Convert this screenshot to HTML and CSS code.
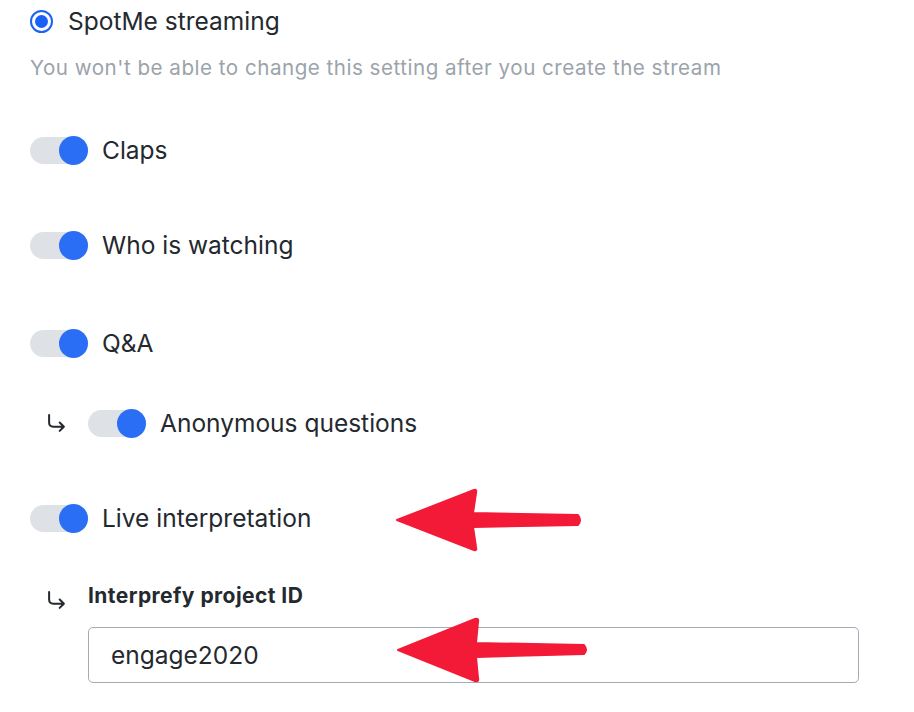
FILE: index.html
```html
<!DOCTYPE html>
<html lang="en">
<head>
<meta charset="utf-8">
<title>SpotMe streaming settings</title>
<link rel="stylesheet" href="styles.css">
</head>
<body>
<div class="page">
  <div class="row radio-row">
    <span class="radio"><span class="radio-dot"></span></span>
    <span class="label">SpotMe streaming</span>
  </div>
  <div class="helper">You won't be able to change this setting after you create the stream</div>

  <div class="row toggle-row r-claps">
    <span class="toggle"><span class="knob"></span></span>
    <span class="label">Claps</span>
  </div>
  <div class="row toggle-row r-who">
    <span class="toggle"><span class="knob"></span></span>
    <span class="label">Who is watching</span>
  </div>
  <div class="row toggle-row r-qa">
    <span class="toggle"><span class="knob"></span></span>
    <span class="label">Q&amp;A</span>
  </div>
  <div class="row toggle-row sub r-anon">
    <svg class="sub-arrow" width="19" height="19" viewBox="0 0 18 18"><path d="M2 1 V8 Q2 12 6 12 H16 M12 8 L16 12 L12 16" fill="none" stroke="#24292f" stroke-width="1.9" stroke-linecap="round" stroke-linejoin="round"/></svg>
    <span class="toggle"><span class="knob"></span></span>
    <span class="label">Anonymous questions</span>
  </div>
  <div class="row toggle-row r-live">
    <span class="toggle"><span class="knob"></span></span>
    <span class="label">Live interpretation</span>
  </div>
  <div class="row sub field-label-row">
    <svg class="sub-arrow low" width="19" height="19" viewBox="0 0 18 18"><path d="M2 1 V8 Q2 12 6 12 H16 M12 8 L16 12 L12 16" fill="none" stroke="#24292f" stroke-width="1.9" stroke-linecap="round" stroke-linejoin="round"/></svg>
    <span class="field-label">Interprefy project ID</span>
  </div>
  <div class="input-wrap">
    <div class="input">engage2020</div>
  </div>

  <svg class="annot a1" width="200" height="80" viewBox="0 0 200 80">
    <path d="M7 40 L84 10 Q87 9 86 13 L83 33 L188 35 Q192 40 188 45 L83 47 L86 67 Q87 71 84 70 Z" fill="#f31a38" stroke="#f31a38" stroke-width="2" stroke-linejoin="round"/>
  </svg>
  <svg class="annot a2" width="210" height="80" viewBox="0 0 210 80">
    <path d="M8 40 L85 9 Q89 8 88 12 L86 33 L194 35 Q198 40 194 44 L86 47 L88 68 Q89 72 85 71 Z" fill="#f31a38" stroke="#f31a38" stroke-width="2" stroke-linejoin="round"/>
  </svg>
</div>
</body>
</html>
```

FILE: styles.css
```css
html, body {
  margin: 0;
  padding: 0;
  background: #ffffff;
}
body {
  font-family: Inter, "Noto Sans", "Liberation Sans", sans-serif;
  color: #24292f;
}
.page {
  position: relative;
  width: 914px;
  height: 712px;
  padding-left: 30px;
  box-sizing: border-box;
  display: flex;
  flex-direction: column;
  overflow: hidden;
}
.row {
  display: flex;
  align-items: center;
  height: 40px;
}
.radio-row {
  height: 42px;
}
.radio {
  width: 23px;
  height: 23px;
  box-sizing: border-box;
  border: 2px solid #1a62f5;
  border-radius: 50%;
  display: flex;
  align-items: center;
  justify-content: center;
  margin-right: 15px;
}
.radio-dot {
  width: 13px;
  height: 13px;
  border-radius: 50%;
  background: #1a62f5;
}
.label {
  font-size: 24.5px;
  letter-spacing: 0;
}
.helper {
  height: 52px;
  line-height: 52px;
  font-size: 20.6px;
  letter-spacing: 0.5px;
  color: #9ba3ab;
}
.toggle {
  position: relative;
  width: 58px;
  height: 27px;
  border-radius: 14px;
  background: #dee1e5;
  margin-right: 14px;
  display: flex;
  justify-content: flex-end;
  align-items: center;
}
.knob {
  width: 29px;
  height: 29px;
  border-radius: 50%;
  background: #2b6ef6;
}
.r-claps { margin-top: 36px; }
.r-who { margin-top: 55px; }
.r-qa { margin-top: 58px; }
.r-anon { margin-top: 40px; }
.r-live { margin-top: 55px; }
.sub {
  padding-left: 17px;
}
.sub-arrow {
  margin-right: 22px;
  flex: none;
}
.sub-arrow.low {
  margin-top: 10px;
}
.field-label-row {
  margin-top: 42px;
  height: 30px;
}
.field-label {
  font-size: 21px;
  font-weight: 700;
  letter-spacing: 0.45px;
}
.input-wrap {
  padding-left: 58px;
  margin-top: 17px;
}
.input {
  width: 771px;
  height: 56px;
  box-sizing: border-box;
  border: 1.5px solid #a3abb4;
  border-radius: 5px;
  padding-left: 22px;
  display: flex;
  align-items: center;
  font-size: 24.5px;
  letter-spacing: 0;
  color: #24292f;
}
.annot {
  position: absolute;
}
.a1 { left: 390px; top: 480px; }
.a2 { left: 390px; top: 610px; }
```
